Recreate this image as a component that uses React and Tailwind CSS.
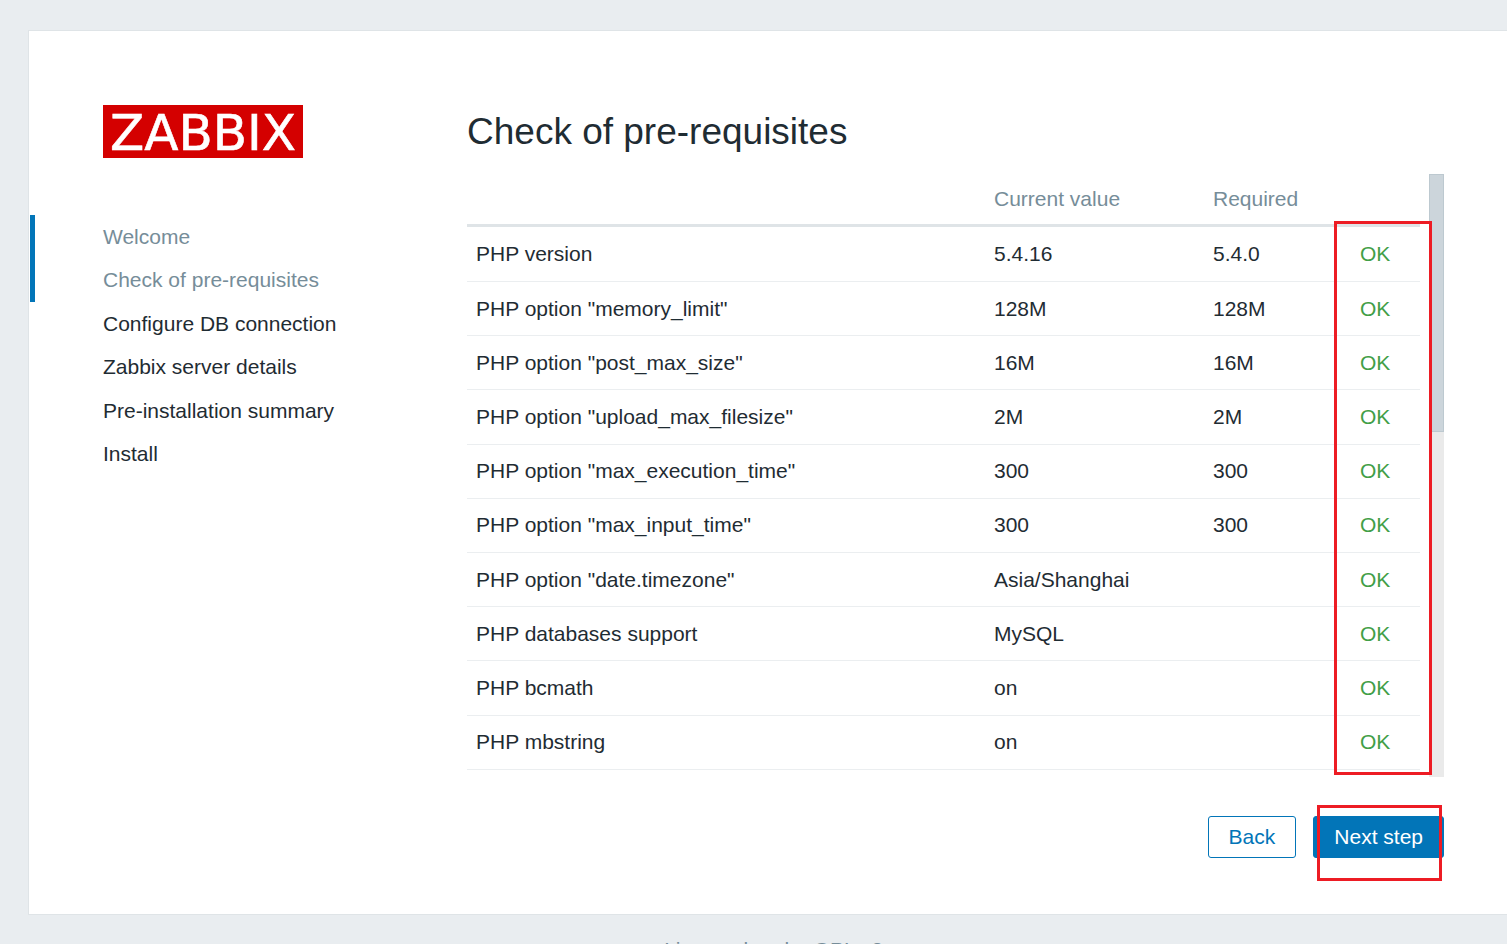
import React from 'react';

const steps = [
  { label: 'Welcome', done: true },
  { label: 'Check of pre-requisites', done: true },
  { label: 'Configure DB connection' },
  { label: 'Zabbix server details' },
  { label: 'Pre-installation summary' },
  { label: 'Install' },
];

const checks = [
  { name: 'PHP version', current: '5.4.16', required: '5.4.0' },
  { name: 'PHP option "memory_limit"', current: '128M', required: '128M' },
  { name: 'PHP option "post_max_size"', current: '16M', required: '16M' },
  { name: 'PHP option "upload_max_filesize"', current: '2M', required: '2M' },
  { name: 'PHP option "max_execution_time"', current: '300', required: '300' },
  { name: 'PHP option "max_input_time"', current: '300', required: '300' },
  { name: 'PHP option "date.timezone"', current: 'Asia/Shanghai', required: '' },
  { name: 'PHP databases support', current: 'MySQL', required: '' },
  { name: 'PHP bcmath', current: 'on', required: '' },
  { name: 'PHP mbstring', current: 'on', required: '' },
];

function Logo() {
  return (
    <svg className="ml-[74px] w-[200px] h-[53px] overflow-visible" viewBox="0 0 200 53" role="img" aria-label="ZABBIX">
      <rect width="200" height="53" fill="#d40000" />
      <text
        x="7"
        y="45"
        fill="#fff"
        stroke="#fff"
        strokeWidth="0.6"
        fontSize="50"
        fontFamily="DejaVu Sans, sans-serif"
      >
        ZABBIX
      </text>
    </svg>
  );
}

function Sidebar() {
  return (
    <aside className="w-[438px] shrink-0">
      <Logo />
      <ul className="mt-[57px] ml-px h-[261px] flex flex-col">
        {steps.map((s) => (
          <li
            key={s.label}
            className={`flex-1 flex items-center border-l-5 pl-[68px] ${
              s.done ? 'border-[#0275b8] text-[#768d99]' : 'border-transparent'
            }`}
          >
            {s.label}
          </li>
        ))}
      </ul>
    </aside>
  );
}

function ChecksTable() {
  return (
    <div className="relative flex gap-[9px] h-[603px]">
      <table className="flex-1 h-[596px] table-fixed border-collapse text-left">
        <thead>
          <tr className="h-[51px] border-b-3 border-[#dfe4e7] text-[#768d99]">
            <th className="px-[9px] font-normal"></th>
            <th className="px-[9px] font-normal w-[219px]">Current value</th>
            <th className="px-[9px] font-normal w-[147px]">Required</th>
            <th className="px-[9px] font-normal w-[69px]"></th>
          </tr>
        </thead>
        <tbody>
          {checks.map((c) => (
            <tr key={c.name} className="border-b border-[#ebeef0]">
              <td className="px-[9px]">{c.name}</td>
              <td className="px-[9px]">{c.current}</td>
              <td className="px-[9px]">{c.required}</td>
              <td className="px-[9px] text-[#429e47]">OK</td>
            </tr>
          ))}
        </tbody>
      </table>

      {/* scrollbar */}
      <div className="w-[15px] bg-[#eaeaea]">
        <div className="h-[258px] bg-[#ccd5db] border border-[#bdc9d0]"></div>
      </div>

      <div className="absolute top-[47px] right-3 w-[98px] h-[554px] border-3 border-[#ed1c24] pointer-events-none"></div>
    </div>
  );
}

export default function App() {
  return (
    <div
      className="h-screen overflow-hidden bg-[#e9edf0] text-[#1f2c33] text-[21px] leading-6"
      style={{ fontFamily: '"Liberation Sans", Arial, sans-serif' }}
    >
      <div className="pt-[30px] pl-7 -mr-3">
        <main className="flex bg-white border border-[#dfe4e7] pt-[74px] pr-[74px] pb-14">
          <Sidebar />
          <section className="flex-1 min-w-0">
            <h1 className="mt-[6px] mb-[21px] text-[37px] leading-[42px]">Check of pre-requisites</h1>
            <ChecksTable />
            <div className="mt-[39px] flex justify-end gap-[17px]">
              <button className="h-[42px] px-5 rounded-[3px] border border-[#0275b8] bg-white text-[#0275b8]">
                Back
              </button>
              <div className="relative flex">
                <button className="h-[42px] px-5 rounded-[3px] border border-[#0275b8] bg-[#0275b8] text-white">
                  Next step
                </button>
                <div className="absolute -top-[11px] left-1 w-[125px] h-[76px] border-3 border-[#ed1c24] pointer-events-none"></div>
              </div>
            </div>
          </section>
        </main>
        <footer className="mt-[23px] text-center text-[#768d99]">Licensed under GPL v2</footer>
      </div>
    </div>
  );
}
